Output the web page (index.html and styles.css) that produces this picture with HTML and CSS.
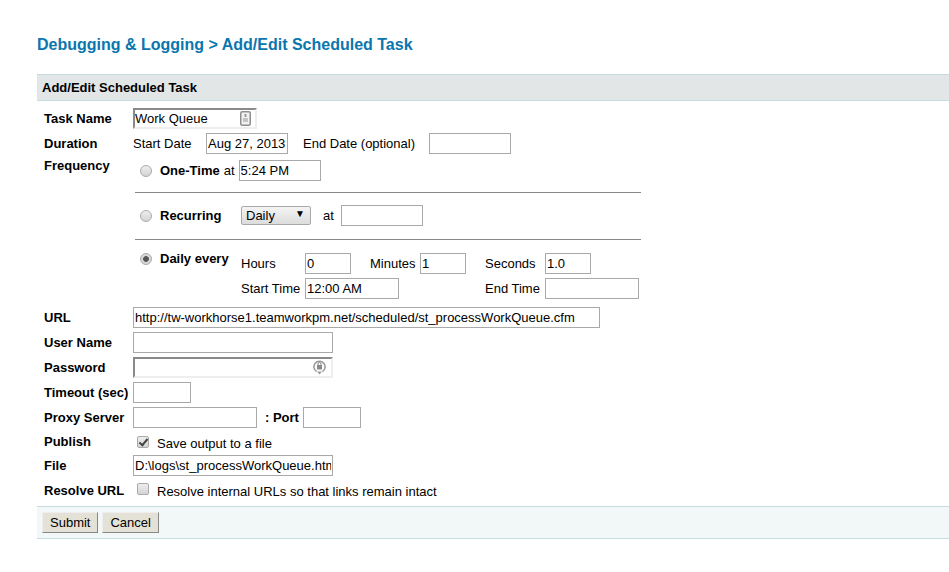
FILE: index.html
```html
<!DOCTYPE html>
<html>
<head>
  <meta charset="UTF-8">
  <title>Add/Edit Scheduled Task</title>
  <link rel="stylesheet" href="styles.css">
</head>
<body>
  <h1 class="page-title">Debugging &amp; Logging &gt; Add/Edit Scheduled Task</h1>
  <form class="task-form">
    <h2 class="bar-title">Add/Edit Scheduled Task</h2>
    <div class="rows">
      <div class="row">
        <label class="name">Task Name</label>
        <span class="with-icon">
          <input type="text" class="inset w124" value="Work Queue">
          <svg class="field-icon" width="11" height="15" viewBox="0 0 11 15"><rect x="0.75" y="0.75" width="9.5" height="13.5" rx="1.5" fill="#f2f2f2" stroke="#8f8f8f" stroke-width="1.5"/><path d="M4.5 3h2v3h-2z" fill="#9a9a9a"/><path d="M3 7h5v4H3z" fill="#c4c4c4"/></svg>
        </span>
      </div>
      <div class="row">
        <label class="name">Duration</label>
        <span class="start-date">Start Date</span>
        <input type="text" class="w82" value="Aug 27, 2013">
        <span class="end-date">End Date (optional)</span>
        <input type="text" class="w82">
      </div>
      <div class="row frequency">
        <label class="name freq-name">Frequency</label>
        <div class="freq">
          <div class="freq-line one-time">
            <input type="radio" name="freq" class="radio">
            <b class="opt">One-Time</b><span class="at-one">at</span>
            <input type="text" class="w82" value="5:24 PM">
          </div>
          <hr class="rule">
          <div class="freq-line recurring">
            <input type="radio" name="freq" class="radio">
            <b class="opt opt-wide">Recurring</b>
            <span class="select-wrap">
              <select class="daily-select"><option>Daily</option></select>
              <span class="select-arrow">▼</span>
            </span>
            <span class="at-rec">at</span>
            <input type="text" class="w82">
          </div>
          <hr class="rule rule-low">
          <div class="daily">
            <div class="daily-head">
              <input type="radio" name="freq" class="radio" checked>
              <b class="opt">Daily every</b>
            </div>
            <div class="daily-grid">
              <span>Hours</span>
              <input type="text" class="w46" value="0">
              <span>Minutes</span>
              <input type="text" class="w46" value="1">
              <span>Seconds</span>
              <input type="text" class="w46" value="1.0">
              <span>Start Time</span>
              <input type="text" class="w94 span3" value="12:00 AM">
              <span>End Time</span>
              <input type="text" class="w94">
            </div>
          </div>
        </div>
      </div>
      <div class="row">
        <label class="name">URL</label>
        <input type="text" class="w467" value="http://tw-workhorse1.teamworkpm.net/scheduled/st_processWorkQueue.cfm">
      </div>
      <div class="row">
        <label class="name">User Name</label>
        <input type="text" class="w200">
      </div>
      <div class="row">
        <label class="name">Password</label>
        <span class="with-icon">
          <input type="password" class="inset w200">
          <svg class="field-icon pass" width="13" height="16" viewBox="0 0 13 16"><path d="M3.6 12.6A5.6 5.6 0 1 1 9.4 12.6" fill="none" stroke="#999" stroke-width="1.5"/><path d="M4 12.5l2.5 3 2.5-3z" fill="#999"/><rect x="4" y="6" width="5" height="4.5" fill="#8a8a8a"/><path d="M5 6V5a1.5 1.5 0 0 1 3 0v1" fill="none" stroke="#8a8a8a"/></svg>
        </span>
      </div>
      <div class="row">
        <label class="name">Timeout (sec)</label>
        <input type="text" class="w58">
      </div>
      <div class="row">
        <label class="name">Proxy Server</label>
        <input type="text" class="w124">
        <b class="port-label">: Port</b>
        <input type="text" class="w58">
      </div>
      <div class="row publish">
        <label class="name">Publish</label>
        <input type="checkbox" class="check" checked>
        <span class="check-text">Save output to a file</span>
      </div>
      <div class="row">
        <label class="name">File</label>
        <input type="text" class="w200" value="D:\logs\st_processWorkQueue.htm">
      </div>
      <div class="row resolve">
        <label class="name">Resolve URL</label>
        <input type="checkbox" class="check">
        <span class="check-text">Resolve internal URLs so that links remain intact</span>
      </div>
    </div>
    <div class="bar-buttons">
      <button type="button">Submit</button>
      <button type="button">Cancel</button>
    </div>
  </form>
</body>
</html>
```

FILE: styles.css
```css
body {
  margin: 0;
  padding: 35px 0 0 37px;
  background: #fff;
  color: #000;
  font-family: "Liberation Sans", Arial, sans-serif;
  font-size: 13px;
}
.page-title {
  margin: 0 0 20px;
  font-size: 16px;
  line-height: 19px;
  color: #0a76ae;
}
.bar-title {
  margin: 0;
  padding: 0 5px;
  height: 25px;
  line-height: 25px;
  font-size: 13px;
  background: #e2e6e6;
  border-top: 1px solid #c4dcdf;
  border-bottom: 1px solid #c4dcdf;
}
.rows {
  padding: 5px 0 3px 7px;
}
.row {
  display: flex;
  align-items: center;
  height: 25px;
}
.name {
  width: 89px;
  flex: none;
  font-weight: bold;
}
input[type="text"], input[type="password"] {
  box-sizing: border-box;
  height: 21px;
  margin: 0;
  padding: 1px 1px;
  border: 1px solid #a9a9a9;
  font: 13px "Liberation Sans", Arial, sans-serif;
  color: #000;
  background: #fff;
  flex: none;
}
input.inset {
  border-style: solid;
  border-width: 2px;
  border-color: #8a8a8a #eee #eee #8a8a8a;
  padding: 0;
}
.w46 { width: 46px; }
.w58 { width: 58px; }
.w82 { width: 82px; }
.w94 { width: 94px; }
.w124 { width: 124px; }
.w200 { width: 200px; }
.w467 { width: 467px; }
.with-icon {
  position: relative;
  display: block;
}
.field-icon {
  position: absolute;
  top: 3px;
  right: 6px;
}
.field-icon.pass {
  top: 2px;
  right: 7px;
}
.start-date { width: 73px; flex: none; }
.end-date { width: 126px; margin-left: 15px; flex: none; }

.frequency {
  height: 149px;
  align-items: flex-start;
}
.freq-name {
  margin-top: 2px;
}
.freq {
  width: 508px;
}
.freq-line {
  display: flex;
  align-items: center;
  height: 21px;
  padding-left: 7px;
}
.one-time { margin-top: 4px; }
.radio {
  appearance: none;
  box-sizing: border-box;
  width: 12px;
  height: 12px;
  margin: 0 8px 0 0;
  border: 1px solid #aaa;
  border-radius: 50%;
  background: linear-gradient(#eee, #d4d4d4);
  flex: none;
}
.radio:checked {
  background: radial-gradient(circle, #555 0 2.5px, #d8d8d8 3.2px);
}
.opt { flex: none; }
.at-one { margin: 0 4px 0 4px; }
.opt-wide { width: 81px; }
.rule {
  margin: 11px 0 12px 2px;
  border: 0;
  border-top: 1px solid #888;
  width: 506px;
}
.rule-low { margin-top: 13px; }
.select-wrap {
  position: relative;
  display: block;
  flex: none;
}
.daily-select {
  appearance: none;
  display: block;
  box-sizing: border-box;
  width: 70px;
  height: 19px;
  padding: 0 0 0 4px;
  border: 1px solid #a9a9a9;
  border-radius: 2px;
  background: linear-gradient(#f4f4f4, #dcdcdc);
  font: 13px "Liberation Sans", Arial, sans-serif;
  color: #000;
}
.select-arrow {
  position: absolute;
  top: 2px;
  right: 6px;
  font-size: 10px;
}
.at-rec { margin: 0 7px 0 12px; }
.daily {
  display: flex;
  margin-top: 13px;
}
.daily-head {
  display: flex;
  align-items: center;
  width: 101px;
  height: 12px;
  padding-left: 7px;
  flex: none;
}
.daily-head .opt { margin-top: -2px; }
.daily-grid {
  display: grid;
  grid-template-columns: 64px 65px 50px 65px 60px auto;
  grid-auto-rows: 21px;
  row-gap: 4px;
  align-items: center;
}
.span3 { grid-column: span 3; }
.port-label { margin-left: 8px; width: 38px; flex: none; white-space: nowrap; }
.publish { height: 23px; }
.check {
  appearance: none;
  position: relative;
  box-sizing: border-box;
  width: 12px;
  height: 12px;
  margin: 0 8px 0 4px;
  border: 1px solid #aaa;
  border-radius: 2px;
  background: linear-gradient(#eee, #d4d4d4);
  flex: none;
}
.resolve .check { margin-bottom: 3px; }
.check-text { padding-top: 3px; }
.resolve .check-text { padding-top: 1px; }
.check:checked::before {
  content: "";
  position: absolute;
  left: 3px;
  top: 0;
  width: 3px;
  height: 7px;
  border: solid #444;
  border-width: 0 2px 2px 0;
  transform: rotate(40deg);
}
.bar-buttons {
  box-sizing: border-box;
  height: 33px;
  padding: 5px;
  display: flex;
  gap: 4px;
  background: #f2f7f7;
  border-top: 1px solid #c4dcdf;
  border-bottom: 1px solid #c4dcdf;
}
.bar-buttons button {
  box-sizing: border-box;
  height: 21px;
  margin: 0;
  padding: 0 7px;
  font: 13px "Liberation Sans", Arial, sans-serif;
  color: #000;
  background: #e4e2d6;
  border: 1px solid;
  border-color: #eee #888 #888 #eee;
}
```
